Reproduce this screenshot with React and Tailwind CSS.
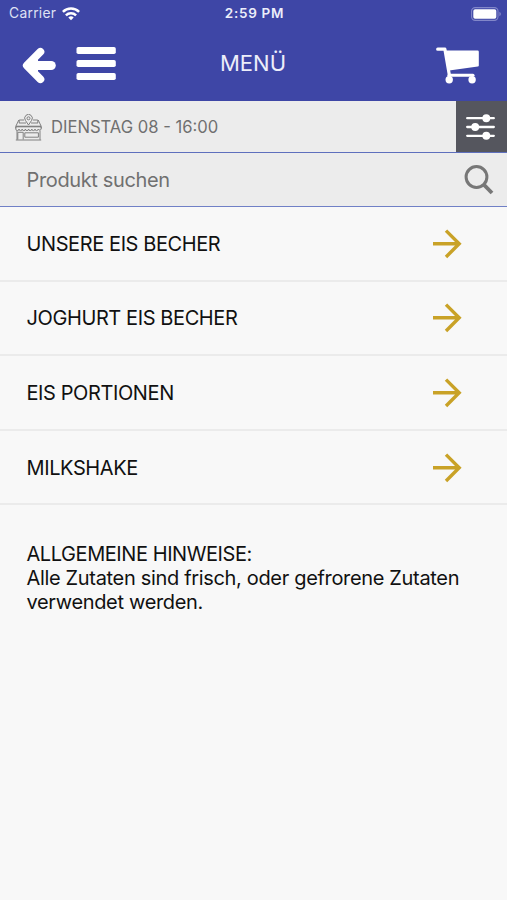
import React from "react";

const categories = [
  { title: "UNSERE EIS BECHER" },
  { title: "JOGHURT EIS BECHER" },
  { title: "EIS PORTIONEN" },
  { title: "MILKSHAKE" },
];

const WifiIcon = () => (
  <svg className="w-[18px] h-[14px]" viewBox="0 0 18 14" fill="none" stroke="#fff" strokeWidth="2.5">
    <path d="M0.9 4.9a11.6 11.6 0 0 1 16.2 0" />
    <path d="M3.9 8.3a7.4 7.4 0 0 1 10.2 0" />
    <path d="M9 13.3l-2.7-2.8a4 4 0 0 1 5.4 0z" fill="#fff" stroke="none" />
  </svg>
);

const BatteryIcon = () => (
  <svg className="w-[31px] h-[14px]" viewBox="0 0 31 14">
    <rect x="0.6" y="0.6" width="26.4" height="12.8" rx="3.6" fill="none" stroke="#8287c9" strokeWidth="1.1" />
    <rect x="2.3" y="2.3" width="23" height="9.4" rx="1.8" fill="#fff" />
    <path d="M28.4 4.8c2 .8 2 3.6 0 4.4z" fill="#8287c9" />
  </svg>
);

const BackIcon = () => (
  <svg className="w-[34px] h-[37px]" viewBox="0 0 34 37" fill="none" stroke="#fff" strokeLinecap="round" strokeLinejoin="round">
    <path d="M18.4 4.8L4.8 18.5 18.4 32.2" strokeWidth="7.8" />
    <path d="M7 18.5h22.2" strokeWidth="9.2" />
    <path d="M5 18.5L15.5 9.5v18z" fill="#fff" strokeWidth="1" />
  </svg>
);

const MenuIcon = () => (
  <svg className="w-10 h-[33px]" viewBox="0 0 40 33" fill="#fff">
    <rect x="0.5" y="0" width="39.3" height="7" rx="1.8" />
    <rect x="0.5" y="13" width="39.3" height="7" rx="1.8" />
    <rect x="0.5" y="26" width="39.3" height="7" rx="1.8" />
  </svg>
);

const CartIcon = () => (
  <svg className="w-11 h-[37px]" viewBox="0 0 44 37">
    <path d="M1.7 2.2h7.2l4.4 25.6v3" fill="none" stroke="#fff" strokeWidth="3.2" strokeLinecap="round" strokeLinejoin="round" />
    <path d="M13 28.2h24" fill="none" stroke="#fff" strokeWidth="3" strokeLinecap="round" />
    <path d="M10 3.5h31.6q1.2 0 1.2 1.2v13.7q0 1-1 1.2L13.2 23.4z" fill="#fff" />
    <circle cx="13.2" cy="32.8" r="3.7" fill="#fff" />
    <circle cx="36.1" cy="32.8" r="3.7" fill="#fff" />
  </svg>
);

const ShopIcon = () => (
  <svg className="w-[27px] h-[27px]" viewBox="0 0 27 27" fill="none" stroke="#808080" strokeWidth="1">
    <path d="M9.2 6H4.2v3M17.8 6h5v3M3.8 6L.8 12.3v2M23.2 6l3 6.3v2M4 9h7M16 9h7" />
    <path d="M13.5 11L10.5 6.5a3.8 3.8 0 1 1 6 0z" />
    <circle cx="13.5" cy="4.3" r="1.5" />
    <path d="M.8 12.5h25.4" strokeWidth="1.6" />
    <path d="M.8 13v2a1.6 1.6 0 0 0 3.2 0 1.6 1.6 0 0 0 3.2 0 1.6 1.6 0 0 0 3.2 0 1.6 1.6 0 0 0 3.2 0 1.6 1.6 0 0 0 3.2 0 1.6 1.6 0 0 0 3.2 0 1.6 1.6 0 0 0 3.2 0 1.6 1.6 0 0 0 3 0v-2" />
    <path d="M2 16.5v9.3M25 16.5v9.3M.8 26h25.4M2.8 25.5v-7.2h5.4v7.2M9.8 18.8h13.6v4.4H9.8z" />
  </svg>
);

const FilterIcon = () => (
  <svg className="w-[29px] h-[26px]" viewBox="0 0 29 26" stroke="#fff" strokeWidth="2.3" strokeLinecap="round" fill="#fff">
    <path d="M1.2 4.2h26.6M1.2 13h26.6M1.2 21.8h26.6" />
    <circle cx="20.3" cy="4.2" r="2.8" />
    <circle cx="9.2" cy="13" r="2.8" />
    <circle cx="20.3" cy="21.8" r="2.8" />
  </svg>
);

const SearchIcon = () => (
  <svg className="w-[30px] h-[30px]" viewBox="0 0 29 30" fill="none" stroke="#777">
    <circle cx="12" cy="12" r="10.4" strokeWidth="3" />
    <path d="M19.3 19.7l8.2 8.3" strokeWidth="3.8" />
  </svg>
);

const ArrowIcon = () => (
  <svg className="w-[30px] h-[30px]" viewBox="0 0 30 30" fill="none" stroke="#c9a227" strokeWidth="3.4">
    <path d="M1 14.8h26M14 1.6L27.2 14.8 14 28" />
  </svg>
);

const App = () => {
  return (
    <div className="w-full h-[900px] bg-[#f8f8f8] flex flex-col font-['Inter',sans-serif] text-[#111]">
      <header className="h-[101px] bg-[#3e46a6] text-white">
        <div className="h-7 grid grid-cols-3 items-center pl-[9px] pr-[5px] pb-px">
          <div className="flex items-center gap-[6px]">
            <span className="text-[13.8px] tracking-[0.3px] text-[#dfe1f4]">Carrier</span>
            <WifiIcon />
          </div>
          <span className="text-[13.5px] font-semibold text-center tracking-[0.7px] pr-[2px] text-[#eceefa]">2:59 PM</span>
          <div className="flex justify-end">
            <BatteryIcon />
          </div>
        </div>
        <div className="h-[73px] grid grid-cols-3 items-center pl-[22px] pr-[27px] pb-[2px]">
          <div className="flex items-center gap-5">
            <div className="pt-[3px]">
              <BackIcon />
            </div>
            <MenuIcon />
          </div>
          <h1 className="text-[22px] text-center text-[#eceefa] pl-1">MENÜ</h1>
          <div className="flex justify-end pt-[3px]">
            <CartIcon />
          </div>
        </div>
      </header>

      <div className="h-[52px] bg-[#ececec] border-b border-[#5e6fbd] flex">
        <div className="grow flex items-center pl-[15px] pt-px gap-[9px] text-[#707070]">
          <ShopIcon />
          <span className="text-[16.6px]">DIENSTAG 08 - 16:00</span>
        </div>
        <button className="w-[51px] bg-[#55565e] flex items-center justify-center pr-[2px]">
          <FilterIcon />
        </button>
      </div>

      <div className="h-[54px] bg-[#ececec] border-b border-[#7080c6] flex items-center justify-between pl-[26.5px] pr-[13px] pt-px">
        <span className="text-[20px] tracking-[-0.36px] text-[#707070]">Produkt suchen</span>
        <SearchIcon />
      </div>

      <ul>
        {categories.map((val) => (
          <li
            key={val.title}
            className="h-[74.6px] border-b-2 border-[#ebebeb] flex items-center justify-between pl-[26.5px] pr-[45px] pt-px"
          >
            <span className="text-[20px] tracking-[-0.4px]">{val.title}</span>
            <ArrowIcon />
          </li>
        ))}
      </ul>

      <div className="pl-[26.5px] pr-10 pt-[37px] text-[20px] leading-6">
        <p className="tracking-[-0.43px]">ALLGEMEINE HINWEISE:</p>
        <p className="tracking-[-0.33px]">Alle Zutaten sind frisch, oder gefrorene Zutaten verwendet werden.</p>
      </div>
    </div>
  );
};

export default App;
